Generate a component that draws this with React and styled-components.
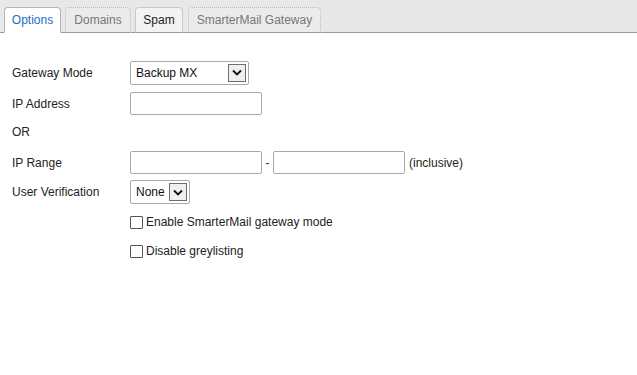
import React from 'react';
import styled, { createGlobalStyle } from 'styled-components';

const GlobalStyle = createGlobalStyle`
  html, body {
    margin: 0;
    padding: 0;
    background: #fff;
    font-family: "Liberation Sans", Arial, sans-serif;
    font-size: 12px;
    color: #222;
  }
`;

const Page = styled.div`
  width: 637px;
  height: 375px;
  background: #fff;
`;

const TabBar = styled.div`
  display: flex;
  align-items: flex-end;
  height: 32px;
  padding: 0 4px;
  background: #e8e8e8;
  border-bottom: 1px solid #9a9a9a;
`;

const Tab = styled.div`
  box-sizing: border-box;
  height: 26px;
  width: ${p => p.w}px;
  margin-right: ${p => p.gap || 4}px;
  display: flex;
  align-items: center;
  justify-content: center;
  margin-bottom: -1px;
  border: 1px ${p => (p.active || p.dark ? 'solid' : 'dotted')}
    ${p => (p.active ? '#b5b5b5' : p.dark ? '#c9c9c9' : '#bdbdbd')};
  border-bottom: ${p => (p.active ? '1px solid #fff' : '1px solid #9a9a9a')};
  border-radius: 4px 4px 0 0;
  background: ${p => (p.active ? '#fff' : p.dark ? '#f3f3f3' : '#ebebeb')};
  color: ${p => (p.active ? '#1a6fc4' : p.dark ? '#222' : '#777')};
  font-size: 12px;
`;

const Form = styled.div`
  display: grid;
  grid-template-columns: 118px auto;
  grid-template-rows: 31px 31px 26px 35px 24px 36px 22px;
  padding: 24px 0 0 12px;
  align-items: center;
`;

const Label = styled.div`
  font-size: 12px;
  color: #222;
`;

const Field = styled.div`
  display: flex;
  align-items: center;
`;

const Select = styled.div`
  box-sizing: border-box;
  width: ${p => p.w}px;
  height: 24px;
  border: 1px solid #a9a9a9;
  border-radius: 2px;
  background: #fff;
  display: flex;
  align-items: center;
  justify-content: space-between;
  padding: 0 2px 0 5px;
  font-size: 12px;
  color: #111;
`;

const Arrow = styled.span`
  box-sizing: border-box;
  width: 18px;
  height: 18px;
  border: 1px solid #6e6e6e;
  background: #efefef;
  display: flex;
  align-items: center;
  justify-content: center;
`;

const Input = styled.input`
  box-sizing: border-box;
  width: 132px;
  height: 23px;
  border: 1px solid #a9a9a9;
  border-radius: 2px;
  padding: 0 4px;
  font-family: inherit;
  font-size: 12px;
  outline: none;
`;

const Dash = styled.span`
  width: 11px;
  text-align: center;
  color: #333;
`;

const Note = styled.span`
  margin-left: 4px;
  color: #222;
`;

const Check = styled.label`
  display: flex;
  align-items: center;
  gap: 3px;
  font-size: 12px;
  color: #222;
`;

const Box = styled.span`
  box-sizing: border-box;
  width: 13px;
  height: 13px;
  border: 1px solid #555;
  border-radius: 1px;
  background: #fff;
`;

const Chevron = () => (
  <svg width="10" height="7" viewBox="0 0 10 7">
    <path d="M1 1.5 L5 5.5 L9 1.5" fill="none" stroke="#111" strokeWidth="1.8" />
  </svg>
);

export default function App() {
  return (
    <Page>
      <GlobalStyle />
      <TabBar>
        <Tab active w={57}>Options</Tab>
        <Tab w={66}>Domains</Tab>
        <Tab dark w={48} gap={5}>Spam</Tab>
        <Tab w={133}>SmarterMail Gateway</Tab>
      </TabBar>
      <Form>
        <Label>Gateway Mode</Label>
        <Field>
          <Select w={119}>
            <span>Backup MX</span>
            <Arrow><Chevron /></Arrow>
          </Select>
        </Field>

        <Label>IP Address</Label>
        <Field><Input /></Field>

        <Label>OR</Label>
        <div />

        <Label>IP Range</Label>
        <Field>
          <Input />
          <Dash>-</Dash>
          <Input />
          <Note>(inclusive)</Note>
        </Field>

        <Label>User Verification</Label>
        <Field>
          <Select w={60}>
            <span>None</span>
            <Arrow><Chevron /></Arrow>
          </Select>
        </Field>

        <div />
        <Check><Box />Enable SmarterMail gateway mode</Check>

        <div />
        <Check><Box />Disable greylisting</Check>
      </Form>
    </Page>
  );
}
